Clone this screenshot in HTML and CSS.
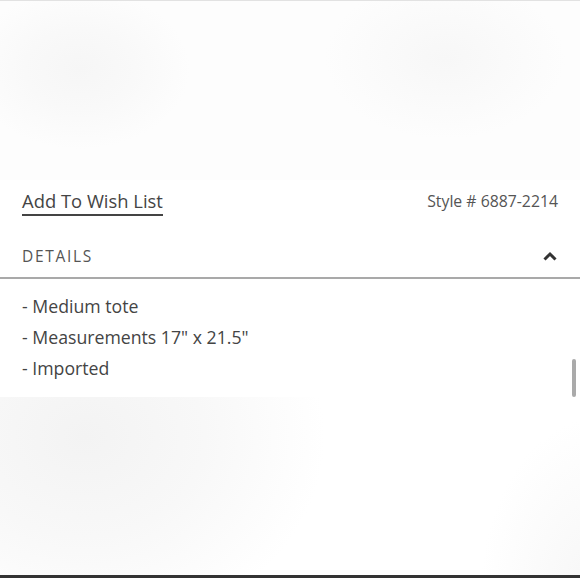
FILE: index.html
```html
<!DOCTYPE html>
<html lang="en">
<head>
<meta charset="utf-8">
<title>Product details</title>
<link rel="stylesheet" href="styles.css">
</head>
<body>
<div class="hero hero-top"></div>
<main class="info">
  <div class="meta-row">
    <a class="wish" href="#">Add To Wish List</a>
    <span class="style-no">Style # 6887-2214</span>
  </div>
  <div class="details-head">
    <span class="details-title">DETAILS</span>
    <svg class="caret" width="14" height="10" viewBox="0 0 14 10" aria-hidden="true"><path d="M1.5 8.5 L7 3 L12.5 8.5" fill="none" stroke="#333" stroke-width="3"/></svg>
  </div>
  <ul class="details-list">
    <li>- Medium tote</li>
    <li>- Measurements 17" x 21.5"</li>
    <li>- Imported</li>
  </ul>
  <div class="scroll-thumb"></div>
</main>
<div class="hero hero-bottom"></div>
</body>
</html>
```

FILE: styles.css
```css
html, body {
  margin: 0;
  padding: 0;
  background: #fff;
}
body {
  width: 580px;
  height: 580px;
  overflow: hidden;
  font-family: "Open Sans", "Liberation Sans", sans-serif;
  color: #444;
}
*, *::before, *::after {
  box-sizing: border-box;
}
.hero {
  width: 100%;
}
.hero-top {
  height: 180px;
  border-top: 1px solid #e2e2e2;
  background:
    radial-gradient(ellipse 110px 80px at 80px 68px, #f6f6f6 0%, #f9f9f9 50%, rgba(252,252,252,0) 100%),
    radial-gradient(ellipse 120px 80px at 445px 58px, #f7f7f7 0%, #fafafa 50%, rgba(252,252,252,0) 100%),
    #fdfdfd;
}
.info {
  position: relative;
  padding: 0 22px;
}
.meta-row {
  display: flex;
  justify-content: space-between;
  align-items: flex-start;
  padding-top: 8px;
  height: 44px;
}
.wish {
  font-size: 18.4px;
  line-height: 25px;
  color: #444;
  text-decoration: none;
  border-bottom: 2px solid #444;
  padding-bottom: 1px;
}
.style-no {
  font-size: 15.8px;
  line-height: 25px;
  color: #555;
  padding-top: 1px;
}
.details-head {
  display: flex;
  justify-content: space-between;
  align-items: center;
  height: 55px;
  margin: 0 -22px;
  padding: 11px 22px 0;
  border-bottom: 2px solid #a9a9a9;
}
.details-title {
  font-size: 15.5px;
  letter-spacing: 1.7px;
  color: #555;
}
.caret {
  display: block;
  margin-right: 1px;
}
.details-list {
  list-style: none;
  margin: 0;
  padding: 12px 0 0 0;
  height: 118px;
  font-size: 17.7px;
  line-height: 31px;
  color: #444;
}
.scroll-thumb {
  position: absolute;
  right: 4px;
  bottom: 0;
  width: 4px;
  height: 38px;
  border-radius: 2px;
  background: #aaa;
}
.hero-bottom {
  height: 181px;
  border-bottom: 3px solid #333;
  background:
    radial-gradient(ellipse 240px 200px at 85px 40px, #f3f3f3 0%, #f8f8f8 50%, rgba(255,255,255,0) 100%),
    radial-gradient(ellipse 120px 180px at 600px 200px, #f6f6f6 0%, rgba(255,255,255,0) 100%),
    #fff;
}
```
